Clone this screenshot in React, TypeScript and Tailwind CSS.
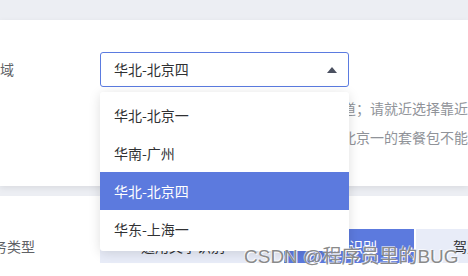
import React from "react";

const font = { fontFamily: '"Noto Sans CJK SC", "Liberation Sans", sans-serif' };

export default function App() {
  const options = ["华北-北京一", "华南-广州", "华北-北京四", "华东-上海一"];
  return (
    <div
      className="relative w-[468px] h-[276px] overflow-hidden bg-[#eceef3] text-[14px]"
      style={font}
    >
      <div className="h-[20px]" />
      {/* card 1 */}
      <div className="relative z-10 h-[166px] bg-white shadow-[0_2px_6px_rgba(0,0,0,0.08)] flex items-start pt-[32px]">
        <div className="w-[100px] shrink-0 h-[35px] flex items-center text-[#606266] whitespace-nowrap">
          <span className="-ml-[14px]">地域</span>
        </div>
        <div className="flex flex-col min-w-0">
          <div className="w-[249px] h-[35px] border border-[#5b7be0] rounded-[3px] flex items-center justify-between pl-[13px] pr-[11px] text-[#303133]">
            <span>华北-北京四</span>
            <svg width="10" height="6" viewBox="0 0 10 6">
              <path d="M5 0 L10 6 L0 6 Z" fill="#4b5060" />
            </svg>
          </div>
          <div className="mt-[7px] pl-[4px] leading-[29px] text-[#909399] whitespace-nowrap">
            <div>地域之间资源内网不互通需使用专线通道；请就近选择靠近您客户的地域</div>
            <div>各地域购买的套餐包不通用，例如华北北京一的套餐包不能在其他地域使用</div>
          </div>
        </div>
      </div>
      <div className="h-[10px]" />
      {/* card 2 */}
      <div className="h-[80px] bg-white flex items-start pt-[33px]">
        <div className="w-[100px] shrink-0 h-[34px] flex items-center text-[#606266] whitespace-nowrap">
          <span className="-ml-[21px]">服务类型</span>
        </div>
        <div className="flex gap-[2px] whitespace-nowrap">
          <div className="w-[182px] h-[34px] bg-[#e8ecf8] text-[#303133] flex items-center justify-center pr-[16px]">
            通用文字识别
          </div>
          <div className="w-[130px] h-[34px] bg-[#5c7ade] text-white flex items-center justify-center">
            车牌识别
          </div>
          <div className="w-[130px] h-[34px] bg-[#e8ecf8] text-[#303133] flex items-center justify-center">
            驾照识别
          </div>
        </div>
      </div>

      {/* dropdown */}
      <div className="absolute z-20 left-[100px] top-[92px] w-[249px] bg-white rounded-[3px] shadow-[0_2px_12px_rgba(0,0,0,0.13)] pt-[4px] pb-[3px]">
        {options.map((o, i) => (
          <div
            key={o}
            className={
              i === 2
                ? "h-[38px] flex items-center pl-[14px] bg-[#5c7ade] text-white"
                : "h-[38px] flex items-center pl-[14px] text-[#303133]"
            }
          >
            {o}
          </div>
        ))}
      </div>

      {/* watermark */}
      <div
        className="absolute z-30 left-[244px] top-[245px] text-[19px] leading-[24px] text-[#8a8a8a] whitespace-nowrap [text-shadow:1px_1px_0_#ffffff,-1px_-1px_0_rgba(255,255,255,0.6)]"
        style={{ fontFamily: '"Liberation Sans", "Noto Sans CJK SC", sans-serif' }}
      >
        CSDN @程序员里的BUG
      </div>
    </div>
  );
}
